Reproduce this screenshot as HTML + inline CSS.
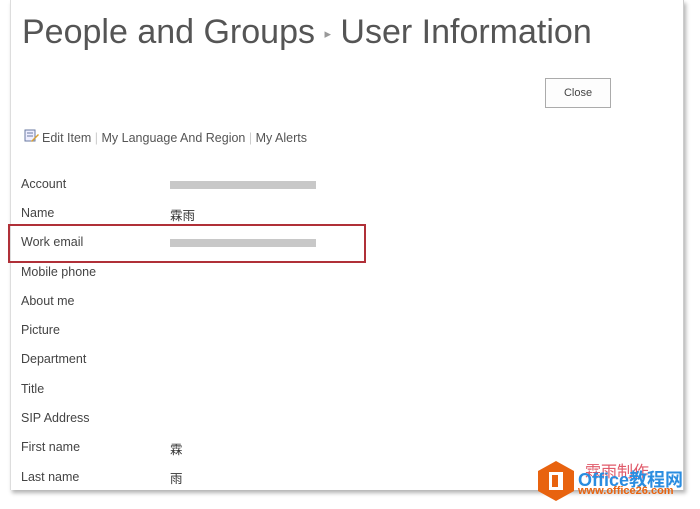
<!DOCTYPE html>
<html><head><meta charset="utf-8"><style>
body{margin:0;width:700px;height:509px;background:#fff;overflow:hidden;position:relative;font-family:"Liberation Sans","Noto Sans CJK SC",sans-serif;}
.page{position:absolute;left:10px;top:0;width:672px;height:490px;background:#fff;border-left:1px solid #ddd;border-right:1px solid #ccc;box-shadow:2px 3px 4px rgba(0,0,0,.3);}
.t{position:absolute;color:#444;font-size:12.5px;}
.h1{position:absolute;left:22px;top:13px;font-size:34px;color:#555;white-space:nowrap;}
.lbl{position:absolute;left:21px;font-size:12.5px;color:#444;}
.val{position:absolute;left:170px;font-size:12.5px;color:#333;}
.blur{position:absolute;left:170px;width:146px;height:8px;background:#c8c8c8;}
</style></head><body>
<div class="page"></div>
<div class="h1">People and Groups <span style="font-size:13px;color:#999;vertical-align:middle">▸</span> User Information</div>
<div style="position:absolute;left:545px;top:78px;width:64px;height:28px;border:1px solid #ababab;font-size:11px;color:#444;text-align:center;line-height:28px;background:#fdfdfd">Close</div>
<svg style="position:absolute;left:24px;top:129px" width="16" height="14"><rect x="1" y="1" width="10" height="11" fill="#eef" stroke="#6a7aa0"/><line x1="3" y1="4" x2="9" y2="4" stroke="#6a7aa0"/><line x1="3" y1="7" x2="9" y2="7" stroke="#6a7aa0"/><path d="M7 12 L14 5 L15 6 L8 13Z" fill="#d9a030"/></svg>
<div class="t" style="left:42px;top:131px;color:#555">Edit Item <span style="color:#ccc">|</span> My Language And Region <span style="color:#ccc">|</span> My Alerts</div>
<div class="lbl" style="top:177px">Account</div><div class="blur" style="top:181px"></div>
<div class="lbl" style="top:206px">Name</div><div class="val" style="top:205px">霖雨</div>
<div class="lbl" style="top:235px">Work email</div><div class="blur" style="top:239px"></div>
<div style="position:absolute;left:8px;top:224px;width:354px;height:35px;border:2px solid #b03038"></div>
<div class="lbl" style="top:265px">Mobile phone</div>
<div class="lbl" style="top:294px">About me</div>
<div class="lbl" style="top:323px">Picture</div>
<div class="lbl" style="top:352px">Department</div>
<div class="lbl" style="top:382px">Title</div>
<div class="lbl" style="top:411px">SIP Address</div>
<div class="lbl" style="top:440px">First name</div><div class="val" style="top:439px">霖</div>
<div class="lbl" style="top:470px">Last name</div><div class="val" style="top:468px">雨</div>
<svg style="position:absolute;left:536px;top:460px" width="40" height="42"><polygon points="20,1 38,11 38,31 20,41 2,31 2,11" fill="#e8630f"/><rect x="13" y="12" width="14" height="18" fill="#fff"/><rect x="16" y="15" width="6" height="12" fill="#e8630f"/></svg>
<div style="position:absolute;left:585px;top:458px;font-size:16px;color:#e05a6a">霖雨制作</div>
<div style="position:absolute;left:578px;top:466px;font-size:18px;font-weight:bold;color:#2a8de0">Office教程网</div>
<div style="position:absolute;left:578px;top:485px;font-size:11px;font-weight:bold;color:#e8630f">www.office26.com</div>
</body></html>
